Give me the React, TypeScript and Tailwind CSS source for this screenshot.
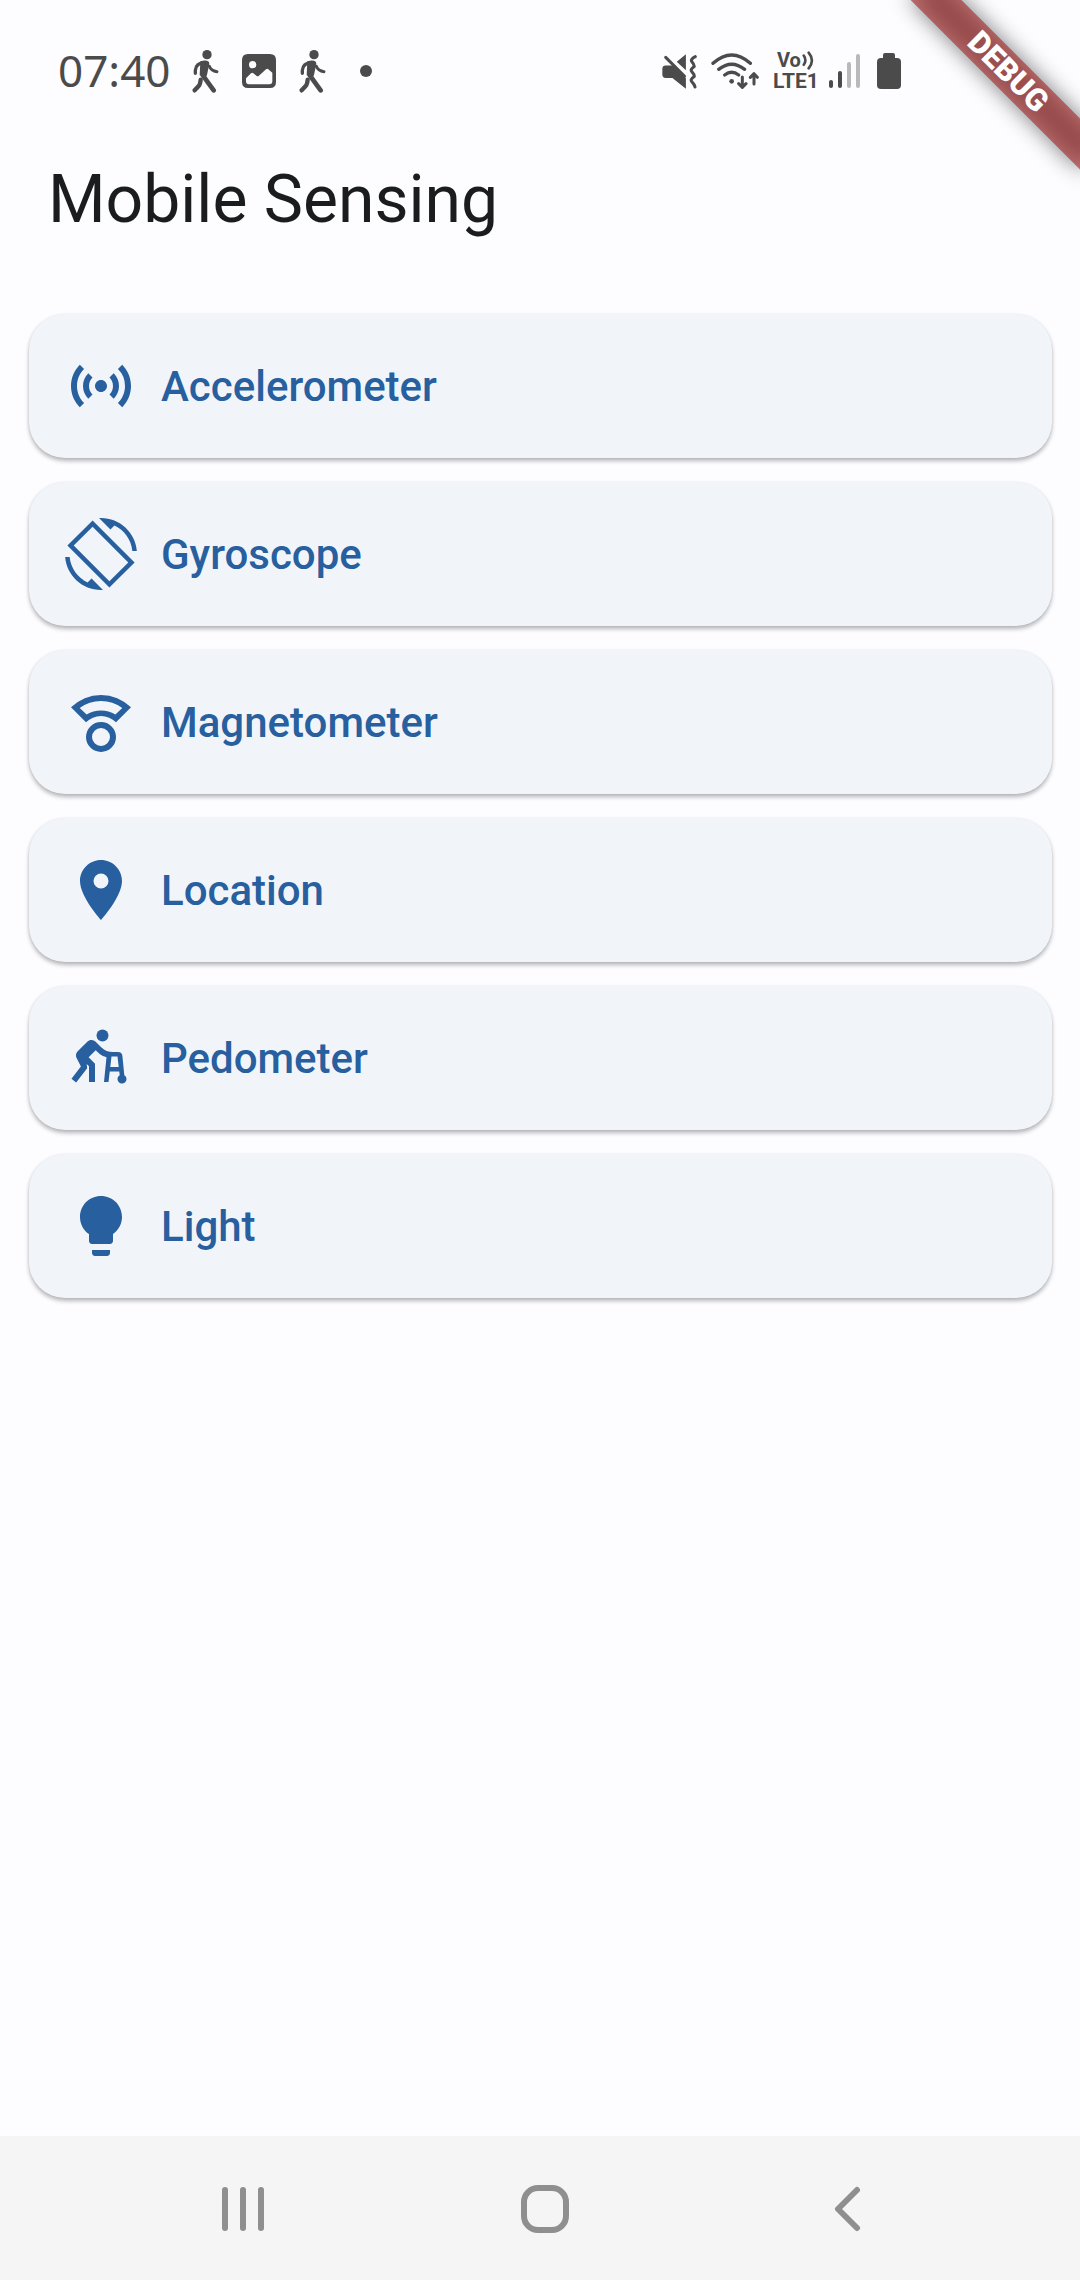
import type { ComponentType } from "react";
import { MdAssistWalker, MdLightbulb, MdLocationOn, MdSensors } from "react-icons/md";

type IconProps = { className?: string };

function GyroscopeIcon({ className }: IconProps) {
  return (
    <svg viewBox="0 0 24 24" className={className} fill="currentColor" fillRule="evenodd" aria-hidden="true">
      <path d="M16.48 2.52c3.27 1.55 5.61 4.72 5.97 8.48h1.5C23.44 4.84 18.29 0 12 0l-.66.03 3.81 3.81 1.33-1.32z" />
      <path d="M7.52 21.48C4.25 19.94 1.91 16.76 1.55 13H.05C.56 19.16 5.71 24 12 24l.66-.03-3.81-3.81-1.33 1.32z" />
      <path d="M9.2 .8L.8 9.2L14.8 23.2L23.2 14.8ZM9.2 2.9L21.1 14.8L14.8 21.1L2.9 9.2Z" />
    </svg>
  );
}

function MagnetometerIcon({ className }: IconProps) {
  return (
    <svg viewBox="0 0 24 24" className={className} fill="currentColor" fillRule="evenodd" aria-hidden="true">
      <path d="M2 7.1A14.2 14.2 0 0 1 22 7.1L17 12.1A7.1 7.1 0 0 0 7 12.1ZM4.9 7.3L7.2 9.5A9.2 9.2 0 0 1 16.8 9.5L19.1 7.3A12 12 0 0 0 4.9 7.3Z" />
      <path d="M12 12a5 5 0 1 0 0 10a5 5 0 0 0 0-10ZM12 14a3 3 0 1 1 0 6a3 3 0 0 1 0-6Z" />
    </svg>
  );
}

const sensors: { label: string; Icon: ComponentType<IconProps> }[] = [
  { label: "Accelerometer", Icon: MdSensors },
  { label: "Gyroscope", Icon: GyroscopeIcon },
  { label: "Magnetometer", Icon: MagnetometerIcon },
  { label: "Location", Icon: MdLocationOn },
  { label: "Pedometer", Icon: MdAssistWalker },
  { label: "Light", Icon: MdLightbulb },
];

function WalkIcon() {
  return (
    <svg viewBox="457 61 81 129" className="h-[43px] w-[27px]" fill="none" stroke="currentColor" strokeLinecap="round" strokeLinejoin="round" aria-hidden="true">
      <circle cx="502" cy="75" r="14" fill="currentColor" stroke="none" />
      <path d="M467 131V122Q469 100 494 98" strokeWidth="10" />
      <path d="M509 110Q514 124 532 126" strokeWidth="9" />
      <path d="M482 95Q508 88 509 102L502 136L497 145L480 137Z" fill="currentColor" stroke="none" />
      <path d="M490 138L522 182" strokeWidth="14" />
      <path d="M483 150Q482 164 477 169L465 182" strokeWidth="13" />
    </svg>
  );
}

function PictureIcon() {
  return (
    <svg viewBox="0 0 102 102" className="size-[34px]" fillRule="evenodd" fill="currentColor" aria-hidden="true">
      <path d="M18 0H84Q102 0 102 18V84Q102 102 84 102H18Q0 102 0 84V18Q0 0 18 0ZM32 21a11 11 0 1 0 0 22a11 11 0 0 0 0-22ZM12 73V82Q12 91 21 91H82Q91 91 91 82V56L78 45Q75 43 72 46L50 66Q47 68 44 66L33 57Q30 55 27 58Z" />
    </svg>
  );
}

function MutedIcon() {
  return (
    <svg viewBox="67 70 104 104" className="size-[35px]" fill="none" stroke="currentColor" strokeLinecap="round" strokeLinejoin="round" aria-hidden="true">
      <path d="M68 114Q68 104 78 104H98L138 142V173L98 141H78Q68 141 68 131Z" fill="currentColor" stroke="none" />
      <path d="M111 93L138 71V118Z" fill="currentColor" stroke="none" />
      <path d="M78 80L134 136" strokeWidth="9" />
      <path d="M166 78Q150 86 156 93T163 107Q149 116 156 123T163 137Q149 146 156 153T165 168" strokeWidth="9" />
    </svg>
  );
}

function WifiIcon() {
  return (
    <svg viewBox="214 68 144 108" className="h-9 w-12" fill="none" stroke="currentColor" strokeLinecap="round" strokeLinejoin="round" strokeWidth="10" aria-hidden="true">
      <path d="M220 99Q276 49 332 99" />
      <path d="M237 117Q276 86 315 117" />
      <path d="M255 134Q276 118 297 134" />
      <circle cx="276" cy="153" r="7" fill="currentColor" stroke="none" />
      <path d="M308 140V170M297 160L308 171L319 160" strokeWidth="9" />
      <path d="M343 161V131M332 141L343 130L353 141" strokeWidth="9" />
    </svg>
  );
}

function SignalIcon() {
  return (
    <svg viewBox="0 0 32 34" className="h-[34px] w-8" fill="currentColor" aria-hidden="true">
      <rect x="0" y="26" width="4" height="8" rx="2" />
      <rect x="9" y="17" width="4" height="17" rx="2" />
      <rect x="18" y="8" width="4" height="26" rx="2" className="fill-[#b9b9ba]" />
      <rect x="27" y="0" width="4" height="34" rx="2" className="fill-[#b9b9ba]" />
    </svg>
  );
}

function BatteryIcon() {
  return (
    <svg viewBox="0 0 24 36" className="h-9 w-6" fill="currentColor" aria-hidden="true">
      <rect x="6" y="0" width="12" height="10" rx="2" />
      <rect x="0" y="5" width="24" height="31" rx="4" />
    </svg>
  );
}

function StatusBar() {
  return (
    <div className="flex h-[114px] items-center justify-between pt-7 pr-[179px] pl-[58px] text-[#4b4b4b]">
      <div className="flex items-center">
        <time className="pb-[2px] font-['Noto_Sans','Open_Sans',sans-serif] text-[44px] leading-none">07:40</time>
        <div className="flex items-center gap-[23px] pl-[22px]">
          <WalkIcon />
          <PictureIcon />
          <WalkIcon />
        </div>
        <span className="ml-[34px] size-3 rounded-full bg-current" />
      </div>
      <div className="flex items-center">
        <MutedIcon />
        <div className="flex items-center gap-[14px] pl-[14px]">
          <WifiIcon />
          <div className="flex w-11 flex-col text-[20px] leading-[21px] font-bold">
            <span className="flex items-center gap-px pl-1">
              Vo
              <svg viewBox="484 68 36 58" className="h-[19px] w-3" fill="none" stroke="currentColor" strokeWidth="8" strokeLinecap="round" aria-hidden="true">
                <path d="M489 82Q499 96 489 110M504 73Q524 97 504 121" />
              </svg>
            </span>
            <span className="text-[21px]">LTE1</span>
          </div>
        </div>
        <div className="flex items-center gap-4 pl-3">
          <SignalIcon />
          <BatteryIcon />
        </div>
      </div>
    </div>
  );
}

function DebugBanner() {
  return (
    <div className="pointer-events-none absolute top-0 right-0 size-60 overflow-hidden">
      <div className="absolute top-[54px] left-12 h-9 w-60 rotate-45">
        <div className="absolute inset-0 bg-black/50 blur-[11px]" />
        <div className="absolute inset-0 flex items-center justify-center bg-[#a42a2a]/63 pb-[2px] text-[31px] leading-none font-black text-white">
          DEBUG
        </div>
      </div>
    </div>
  );
}

function NavigationBar() {
  return (
    <nav className="grid h-36 grid-cols-3 bg-[#f5f5f5] pt-[2px] pr-[81px] pl-[92px] text-[#8f8f8f]">
      <button type="button" aria-label="Recent apps" className="flex items-center justify-center gap-3">
        <span className="h-11 w-[6px] rounded-full bg-current" />
        <span className="h-11 w-[6px] rounded-full bg-current" />
        <span className="h-11 w-[6px] rounded-full bg-current" />
      </button>
      <button type="button" aria-label="Home" className="flex items-center justify-center">
        <span className="size-12 rounded-[17px] border-[6px] border-current" />
      </button>
      <button type="button" aria-label="Back" className="flex items-center justify-center">
        <svg viewBox="0 0 28 46" className="h-[46px] w-7" fill="none" stroke="currentColor" strokeWidth="6" strokeLinecap="round" strokeLinejoin="round" aria-hidden="true">
          <path d="M23 4L4 23L23 42" />
        </svg>
      </button>
    </nav>
  );
}

export default function App() {
  return (
    <div className="relative flex min-h-screen flex-col bg-[#fdfdff] font-['Roboto',sans-serif]">
      <StatusBar />
      <header className="flex h-[168px] items-center px-12 pt-1">
        <h1 className="text-[66px] leading-[84px] text-[#1a1c1e]">Mobile Sensing</h1>
      </header>
      <main className="flex flex-1 flex-col gap-6 pt-8 pr-7 pl-[29px]">
        {sensors.map(({ label, Icon }) => (
          <button
            key={label}
            type="button"
            className="flex h-36 items-center gap-6 rounded-[36px] bg-[#f1f5fa] px-9 text-[42px] leading-[60px] font-medium text-[#275f9f] shadow-[0_3px_4px_rgba(0,0,0,0.28),0_0_2px_rgba(0,0,0,0.08)]"
          >
            <Icon className="size-[72px]" />
            <span className="pt-[2px]">{label}</span>
          </button>
        ))}
      </main>
      <NavigationBar />
      <DebugBanner />
    </div>
  );
}
